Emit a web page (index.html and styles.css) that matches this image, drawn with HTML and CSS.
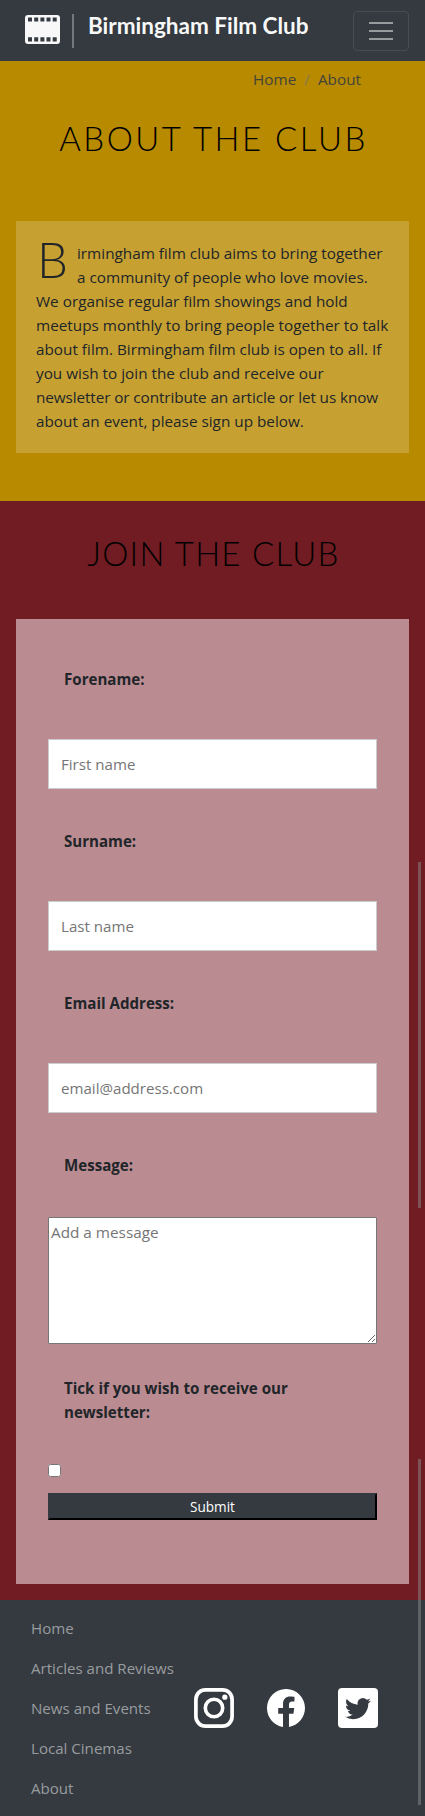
FILE: index.html
```html
<!DOCTYPE html>
<html lang="en">
<head>
<meta charset="utf-8">
<title>Birmingham Film Club</title>
<link rel="stylesheet" href="styles.css">
</head>
<body>
<header class="navbar">
  <svg class="logo" width="35" height="29" viewBox="0 0 35 29">
    <rect width="35" height="29" rx="3" fill="#f8f8f8"/>
    <path fill="#343a40" d="M3 2.5h4v4H3zM9.200 2.500h4v4h-4zM15.400 2.500h4v4h-4zM21.500 2.500h4v4h-4zM27.700 2.500h4v4h-4zM3 22.300h4v4.300H3zM9.200 22.300h4v4.300h-4zM15.400 22.300h4v4.300h-4zM21.500 22.300h4v4.300h-4zM27.700 22.300h4v4.300h-4z"/>
  </svg>
  <span class="divider"></span>
  <span class="brand">Birmingham Film Club</span>
  <button class="toggler" aria-label="Menu"><span></span><span></span><span></span></button>
</header>
<main>
  <section class="about">
    <nav class="breadcrumb"><a>Home</a><i>/</i><a>About</a></nav>
    <h1 class="title title-about">ABOUT THE CLUB</h1>
    <p class="intro"><span class="dropcap">B</span>irmingham film club aims to bring together<br>a community of people who love movies.<br>We organise regular film showings and hold<br>meetups monthly to bring people together to talk<br>about film. Birmingham film club is open to all. If<br>you wish to join the club and receive our<br><span class="tight">newsletter or contribute an article or let us know</span><br>about an event, please sign up below.</p>
  </section>
  <section class="join">
    <h2 class="title title-join">JOIN THE CLUB</h2>
    <form class="panel">
      <label for="fn">Forename:</label>
      <input class="field" id="fn" type="text" placeholder="First name">
      <label for="sn">Surname:</label>
      <input class="field" id="sn" type="text" placeholder="Last name">
      <label for="em">Email Address:</label>
      <input class="field" id="em" type="email" placeholder="email@address.com">
      <label class="msg-label" for="msg">Message:</label>
      <textarea id="msg" placeholder="Add a message"></textarea>
      <label class="tick-label" for="nl">Tick if you wish to receive our<br>newsletter:</label>
      <input class="check" id="nl" type="checkbox">
      <button class="submit" type="button">Submit</button>
    </form>
  </section>
</main>
<footer class="footer">
  <ul class="links">
    <li>Home</li><li>Articles and Reviews</li><li>News and Events</li><li>Local Cinemas</li><li>About</li>
  </ul>
  <div class="social">
    <svg width="40" height="40" viewBox="0 0 40 40" fill="none" stroke="#fff">
      <rect x="1.900" y="1.900" width="36.200" height="36.200" rx="9.500" stroke-width="3.700"/>
      <circle cx="20" cy="20" r="8.700" stroke-width="3.600"/>
      <circle cx="30.800" cy="9.200" r="2.600" fill="#fff" stroke="none"/>
    </svg>
    <svg width="38" height="38" viewBox="0 0 16 16" fill="#fff">
      <path d="M16 8.049c0-4.446-3.582-8.050-8-8.050C3.580 0-.002 3.603-.002 8.050c0 4.017 2.926 7.347 6.750 7.951v-5.625h-2.030V8.050H6.750V6.275c0-2.017 1.195-3.131 3.022-3.131.876 0 1.791.157 1.791.157v1.980h-1.009c-.993 0-1.303.621-1.303 1.258v1.510h2.218l-.354 2.326H9.250V16c3.824-.604 6.750-3.934 6.750-7.951z"/>
    </svg>
    <svg width="40" height="40" viewBox="0 0 40 40">
      <rect width="40" height="40" rx="4" fill="#fff"/>
      <path fill="#343a40" transform="translate(7 7.700) scale(1.080)" d="M23.953 4.570a10 10 0 01-2.825.775 4.958 4.958 0 002.163-2.723c-.951.555-2.005.959-3.127 1.184a4.920 4.920 0 00-8.384 4.482C7.690 8.095 4.067 6.130 1.640 3.162a4.822 4.822 0 00-.666 2.475c0 1.710.870 3.213 2.188 4.096a4.904 4.904 0 01-2.228-.616v.060a4.923 4.923 0 003.946 4.827 4.996 4.996 0 01-2.212.085 4.936 4.936 0 004.604 3.417 9.867 9.867 0 01-6.102 2.105c-.390 0-.779-.023-1.170-.067a13.995 13.995 0 007.557 2.209c9.053 0 13.998-7.496 13.998-13.985 0-.210 0-.420-.015-.630A9.935 9.935 0 0024 4.590z"/>
    </svg>
  </div>
</footer>
<span class="scroll scroll-a"></span>
<span class="scroll scroll-b"></span>
</body>
</html>
```

FILE: styles.css
```css
* { box-sizing: border-box; }
body {
  margin: 0;
  position: relative;
  font: 15.3px/24px "Open Sans", "Noto Sans", sans-serif;
  color: #212529;
  overflow-x: hidden;
}
.navbar {
  height: 61px;
  background: #343a40;
  display: flex;
  align-items: flex-start;
  padding: 11px 16px 0 25px;
}
.logo { margin-top: 4px; }
.divider { width: 2px; height: 34px; margin: 3px 14px 0 12px; background: #75797d; }
.brand { font: 700 22.5px/30px Lato, sans-serif; color: #f8f8f8; white-space: nowrap; }
.toggler {
  margin-left: auto;
  width: 56px;
  height: 40px;
  padding: 0;
  display: flex;
  flex-direction: column;
  align-items: center;
  justify-content: center;
  gap: 6px;
  background: none;
  border: 1px solid #484d53;
  border-radius: 4px;
}
.toggler span { width: 24px; height: 2px; background: #999c9f; }
.about { height: 440px; background: #b88a00; padding: 6px 16px 0; }
.breadcrumb { display: flex; justify-content: flex-end; padding-right: 48px; color: #43443a; }
.breadcrumb i { font-style: normal; color: #867b4f; margin: 0 8px; }
.title { margin: 0; font: 300 33px/40px Lato, sans-serif; color: #000; text-align: center; white-space: nowrap; }
.title-about { margin-top: 27px; padding-left: 2px; letter-spacing: 2.5px; }
.intro {
  margin: 63px 0 0;
  height: 232px;
  padding: 20px 20px 0;
  background: #c6a132;
  white-space: nowrap;
}
.tight { letter-spacing: -0.1px; }
.dropcap { float: left; width: 41px; height: 48px; padding-left: 1px; font: 300 49px/37px Lato, sans-serif; }
.join { height: 1099px; background: #701c22; padding: 32px 16px 0; }
.title-join { padding-left: 2px; letter-spacing: 1.25px; }
.panel {
  margin-top: 46px;
  height: 965px;
  padding: 48px 32px 0;
  background: #ba8c91;
  display: flex;
  flex-direction: column;
}
.panel label { font-weight: 700; padding-left: 16px; height: 72px; font-size: 15.1px; }
.field {
  height: 50px;
  margin-bottom: 40px;
  padding: 0 12px;
  border: 1px solid #ccc;
  font: inherit;
  font-size: 15.1px;
  flex: none;
}
.field::placeholder, textarea::placeholder { color: #757575; }
.panel .msg-label { height: 64px; }
textarea {
  height: 127px;
  border: 1px solid #767676;
  border-radius: 1px;
  padding: 2px;
  font: inherit;
  resize: vertical;
}
.panel .tick-label { margin-top: 32px; height: 88px; }
.check { width: 13px; height: 13px; margin: 0; }
.submit {
  height: 27px;
  margin-top: 16px;
  padding: 0;
  border: 2px solid;
  border-color: #343a40 #000 #000 #343a40;
  background: #343a40;
  color: #fff;
  font: 13.600px/20px "Open Sans", sans-serif;
}
.footer { height: 216px; background: #343a40; padding: 8px 47px 0 31px; display: flex; justify-content: space-between; color: #999c9f; }
.links { list-style: none; margin: 0; padding: 0; white-space: nowrap; font-size: 15.1px; }
.links li { height: 40px; line-height: 40px; }
.social { display: flex; align-items: center; gap: 33px; height: 40px; margin-top: 80px; }
.scroll { position: absolute; left: 418px; width: 3px; height: 346px; background: rgba(137, 137, 137, 0.500); }
.scroll-a { top: 862px; }
.scroll-b { top: 1459px; }
```
